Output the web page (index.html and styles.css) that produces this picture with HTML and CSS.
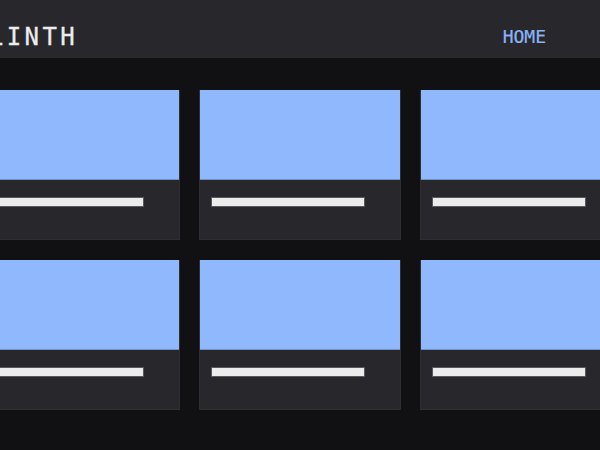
FILE: index.html
```html
<!DOCTYPE html>
<html>
<head>
<meta charset="utf-8">
<link rel="stylesheet" href="styles.css">
</head>
<body>
<header class="topbar">
  <div class="logo">PLINTH</div>
  <nav class="nav"><a class="nav-link" href="#">HOME</a></nav>
</header>
<main class="stage">
  <div class="grid">
    <div class="card"><div class="thumb"></div><div class="card-body"><div class="bar"></div></div></div>
    <div class="card"><div class="thumb"></div><div class="card-body"><div class="bar"></div></div></div>
    <div class="card"><div class="thumb"></div><div class="card-body"><div class="bar"></div></div></div>
    <div class="card"><div class="thumb"></div><div class="card-body"><div class="bar"></div></div></div>
    <div class="card"><div class="thumb"></div><div class="card-body"><div class="bar"></div></div></div>
    <div class="card"><div class="thumb"></div><div class="card-body"><div class="bar"></div></div></div>
  </div>
</main>
</body>
</html>
```
FILE: styles.css
```css
html, body {
  margin: 0;
  padding: 0;
  background: #111113;
  overflow: hidden;
  font-family: "DejaVu Sans Mono", monospace;
}
.topbar {
  height: 58px;
  box-sizing: border-box;
  padding: 16px 54px 0 0;
  background: #27272c;
  display: flex;
  align-items: center;
  justify-content: space-between;
}
.logo {
  margin-left: -29px;
  font-size: 24px;
  line-height: 24px;
  letter-spacing: 3.4px;
  font-weight: 500;
  color: #ececec;
  -webkit-text-stroke: 0.3px #ececec;
}
.nav-link {
  font-size: 18px;
  line-height: 18px;
  color: #8ab4f8;
  text-decoration: none;
  -webkit-text-stroke: 0.2px #8ab4f8;
}
.stage {
  display: flex;
  justify-content: center;
  padding-top: 32px;
}
.grid {
  flex: none;
  display: grid;
  grid-template-columns: repeat(3, 202px);
  column-gap: 19px;
  row-gap: 20px;
}
.card {
  height: 150px;
  box-sizing: border-box;
  background: #27272c;
  border: 1px solid #2e2e33;
  border-top: none;
  display: flex;
  flex-direction: column;
}
.thumb {
  height: 90px;
  box-sizing: border-box;
  background: #8fb8fd;
  border-bottom: 1px solid #6f8fc6;
}
.card-body {
  padding: 17px 0 0 11px;
}
.bar {
  width: 154px;
  height: 10px;
  box-sizing: border-box;
  background: #ececec;
  border: 1px solid #58585e;
}
```
